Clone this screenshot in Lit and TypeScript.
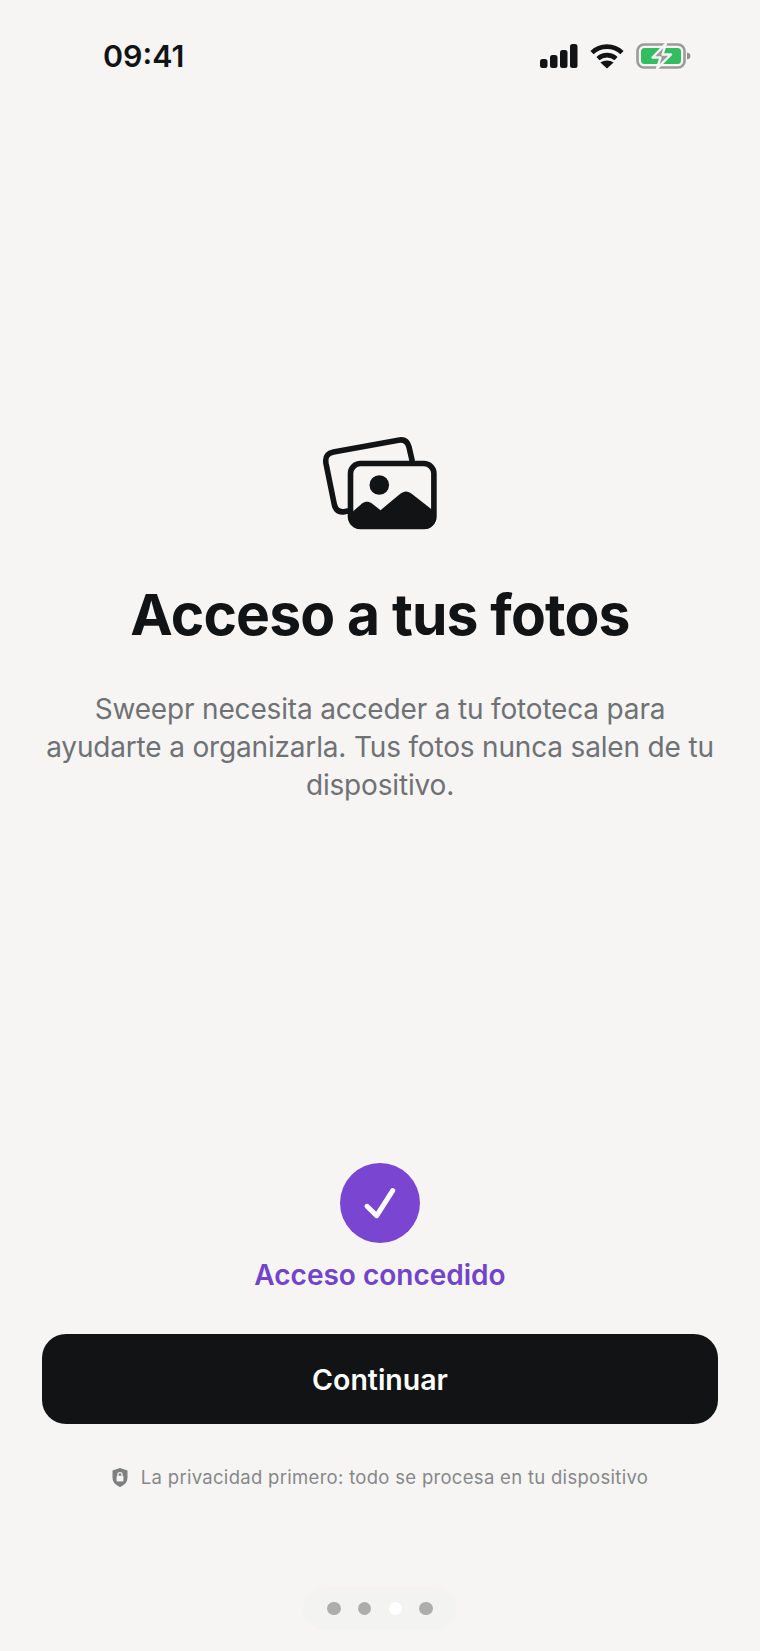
import { LitElement, html, css } from "lit";
import { customElement } from "lit/decorators.js";

@customElement("app-root")
export class AppRoot extends LitElement {
  static styles = css`
    :host {
      display: flex;
      flex-direction: column;
      width: 760px;
      height: 1651px;
      overflow: hidden;
      background: #f6f5f4;
      font-family: Inter, "Liberation Sans", sans-serif;
      color: #111314;
    }
    .status {
      display: flex;
      align-items: center;
      justify-content: space-between;
      height: 40px;
      margin-top: 36px;
      padding: 0 69px 0 103px;
    }
    .time { font-size: 30.4px; font-weight: 600; letter-spacing: 0; line-height: 40px; }
    .status-icons { display: flex; align-items: center; gap: 12px; }
    .status-icons svg { display: block; }
    .hero {
      display: flex;
      flex-direction: column;
      align-items: center;
      margin-top: 344px;
    }
    .hero-icon { display: block; width: 160px; height: 120px; }
    h1 {
      margin: 41px 0 0;
      font-size: 57px;
      line-height: 68px;
      font-weight: 700;
      letter-spacing: -0.85px;
      text-align: center;
    }
    .body {
      margin: 41px 0 0;
      width: 700px;
      font-size: 28px;
      line-height: 38.2px;
      letter-spacing: -0.17px;
      color: #6f7174;
      text-align: center;
    }
    .spacer { flex: 1; }
    .granted { display: flex; flex-direction: column; align-items: center; }
    .check {
      width: 80px;
      height: 80px;
      border-radius: 50%;
      background: #7a45d1;
      display: flex;
      align-items: center;
      justify-content: center;
    }
    .granted-label {
      margin-top: 14px;
      font-size: 28px;
      line-height: 36px;
      font-weight: 600;
      color: #7144c9;
    }
    .cta {
      display: flex;
      align-items: center;
      justify-content: center;
      margin: 41px 42px 0;
      height: 90px;
      border-radius: 24px;
      background: #111314;
      color: #fff;
      font-size: 28.5px;
      font-weight: 600;
    }
    .privacy {
      display: flex;
      align-items: center;
      justify-content: center;
      gap: 13px;
      margin-top: 39px;
      font-size: 18.5px;
      line-height: 28px;
      letter-spacing: 0.3px;
      color: #86888a;
    }
    .dots-wrap { display: flex; justify-content: center; margin: 96px 0 21px; }
    .dots {
      display: flex;
      align-items: center;
      gap: 17.3px;
      height: 43px;
      padding: 0 24.5px;
      border-radius: 22px;
      background: #f3f3f2;
    }
    .dot { width: 13.4px; height: 13.4px; border-radius: 50%; background: #adadac; }
    .dot.on { background: #fff; }
  `;

  render() {
    return html`
      <div class="status">
        <span class="time">09:41</span>
        <div class="status-icons">
          <svg width="38" height="24" viewBox="0 0 38 24" fill="#111314">
            <rect x="0" y="15" width="7.5" height="9" rx="2.5" />
            <rect x="10" y="11" width="7.5" height="13" rx="2.5" />
            <rect x="20" y="6" width="7.5" height="18" rx="2.5" />
            <rect x="30" y="0" width="7.5" height="24" rx="2.5" />
          </svg>
          <svg width="34" height="26" viewBox="0 0 34 26" fill="none" stroke="#111314" stroke-width="4.6">
            <path d="M2 9.6C10.4 1.6 23.6 1.6 32 9.6" />
            <path d="M8 15.6C13.2 10.9 20.8 10.9 26 15.6" />
            <path d="M17 25.5L10.4 19.4C14 16.7 20 16.7 23.6 19.4Z" fill="#111314" stroke="none" />
          </svg>
          <svg width="55" height="26" viewBox="0 0 55 26">
            <rect x="1.5" y="1.5" width="47" height="23" rx="6.5" fill="none" stroke="#9a9c9b" stroke-width="2.6" />
            <rect x="5" y="5" width="40" height="16" rx="3.5" fill="#34bd60" />
            <path d="M51 9.5C53 9.8 54.5 11 54.5 13S53 16.2 51 16.5Z" fill="#8f9190" />
            <path d="M30 .5L16.5 14.5H24.5L21 25.5L35 11.5H26.5Z" fill="#9a9c9b" stroke="#f6f5f4" stroke-width="2.4" stroke-linejoin="round" />
          </svg>
        </div>
      </div>

      <div class="hero">
        <svg class="hero-icon" viewBox="0 0 160 120">
          <path
            d="M112 40L109 27C107.4 21 103.3 19.2 98.3 20.2L33.5 32C26.5 33.5 25 37.5 26 43.5L34.3 84.5C35.7 90.5 39.3 92.5 44.3 91.7L47.5 91"
            fill="none"
            stroke="#111314"
            stroke-width="5.6"
            stroke-linecap="round"
          />
          <rect x="50.5" y="43.5" width="83.4" height="63" rx="10" fill="none" stroke="#111314" stroke-width="5.6" />
          <circle cx="79.3" cy="65" r="9.8" fill="#111314" />
          <path
            d="M50 94L62 83.5C65 81 69 81 72 83.5L80.5 90.2L100 74C104 70.6 108 70.6 112 74L135 92V98C135 104 131 109 125 109H60C54 109 50 104 50 98Z"
            fill="#111314"
          />
        </svg>
        <h1>Acceso a tus fotos</h1>
        <p class="body">
          Sweepr necesita acceder a tu fototeca para<br />ayudarte a organizarla. Tus fotos nunca salen de tu<br />dispositivo.
        </p>
      </div>

      <div class="spacer"></div>

      <div class="granted">
        <div class="check">
          <svg width="40" height="40" viewBox="0 0 40 40" fill="none" stroke="#fff" stroke-width="5" stroke-linecap="round" stroke-linejoin="round">
            <path d="M7 23.3L16.7 32.7L32.7 7.7" />
          </svg>
        </div>
        <div class="granted-label">Acceso concedido</div>
      </div>

      <div class="cta">Continuar</div>

      <div class="privacy">
        <svg width="16" height="19" viewBox="0 0 16 19">
          <path d="M8 0L15.5 2.6V9.5C15.5 14 12.5 17 8 19C3.5 17 .5 14 .5 9.5V2.6Z" fill="#7d7f80" />
          <rect x="4.6" y="7.8" width="6.8" height="5.6" rx="1" fill="#f6f5f4" />
          <path d="M6 8V6.6C6 4 10 4 10 6.6V8" fill="none" stroke="#f6f5f4" stroke-width="1.3" />
        </svg>
        <span>La privacidad primero: todo se procesa en tu dispositivo</span>
      </div>

      <div class="dots-wrap">
        <div class="dots">
          <span class="dot"></span>
          <span class="dot"></span>
          <span class="dot on"></span>
          <span class="dot"></span>
        </div>
      </div>
    `;
  }
}
